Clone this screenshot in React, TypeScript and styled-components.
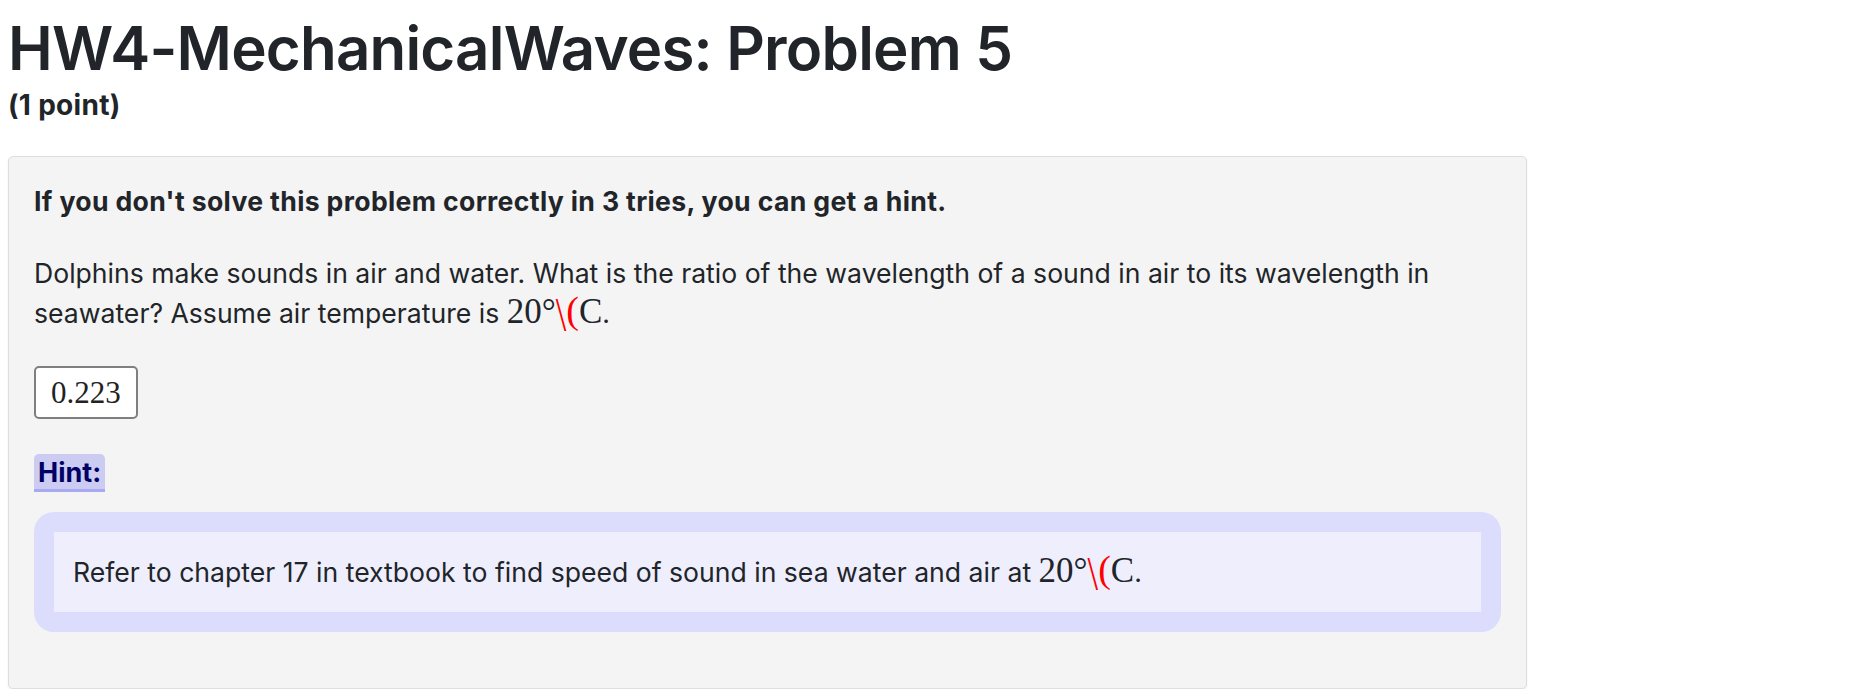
import React from "react";
import styled, { createGlobalStyle } from "styled-components";

const GlobalStyle = createGlobalStyle`
  html, body {
    margin: 0;
    padding: 0;
    background: #ffffff;
  }
  body {
    font-family: Inter, "Noto Sans", "Liberation Sans", sans-serif;
    color: #212529;
  }
`;

const Page = styled.div`
  padding: 0 8px;
  width: 1519px;
`;

const Title = styled.h1`
  margin: 0;
  padding-top: 10px;
  font-size: 60px;
  font-weight: 600;
  line-height: 76px;
  letter-spacing: -0.8px;
`;

const Points = styled.div`
  font-size: 28px;
  font-weight: 700;
  line-height: 32px;
  letter-spacing: 0.3px;
  margin-top: 3px;
`;

const Card = styled.div`
  margin-top: 35px;
  background: #f4f4f4;
  border: 1px solid #dedede;
  border-radius: 5px;
  box-shadow: 0 1px 2px rgba(0, 0, 0, 0.08);
  padding: 24px 25px 56px;
  font-size: 26.6px;
  line-height: 40px;
`;

const Lead = styled.p`
  margin: 0 0 32px;
  font-weight: 700;
  letter-spacing: 0.35px;
`;

const Text = styled.p`
  margin: 0 0 33px;
`;

const Math = styled.span`
  font-family: "Liberation Serif", "DejaVu Serif", serif;
  font-size: 35px;
  line-height: 0;
`;

const Err = styled.span`
  color: #ff0000;
  font-family: "Liberation Serif", serif;
  font-size: 38px;
  line-height: 0;
`;

const Slash = styled.span`
  display: inline-block;
  transform: translateY(4px) scaleY(1.3);
`;

const AnswerBox = styled.div`
  display: inline-flex;
  align-items: center;
  height: 49px;
  padding: 0 15px;
  background: #ffffff;
  border: 2px solid #7f7f7f;
  border-radius: 5px;
  font-family: "Liberation Serif", "DejaVu Serif", serif;
  font-size: 31px;
  color: #222222;
`;

const HintRow = styled.div`
  margin-top: 35px;
  line-height: 0;
`;

const HintLabel = styled.span`
  display: inline-block;
  height: 35px;
  padding: 0 4px;
  background: #ccccf2;
  border-bottom: 3px solid #a9a9f3;
  border-radius: 5px 5px 0 0;
  color: #000066;
  font-weight: 700;
  font-size: 27px;
  line-height: 38px;
`;

const HintOuter = styled.div`
  margin-top: 20px;
  background: #dcdcfd;
  border-radius: 20px;
  padding: 20px;
`;

const HintInner = styled.div`
  background: #eeeefd;
  padding: 20px 19px;
`;

const Temp = () => (
  <>
    <Math>20°</Math>
    <Err>
      <Slash>\</Slash>(
    </Err>
    <Math>C</Math>.
  </>
);

export default function App() {
  return (
    <>
      <GlobalStyle />
      <Page>
        <Title>HW4-MechanicalWaves: Problem 5</Title>
        <Points>(1 point)</Points>
        <Card>
          <Lead>If you don't solve this problem correctly in 3 tries, you can get a hint.</Lead>
          <Text>
            Dolphins make sounds in air and water. What is the ratio of the wavelength of a sound in air to
            its wavelength in seawater? Assume air temperature is <Temp />
          </Text>
          <AnswerBox>0.223</AnswerBox>
          <HintRow>
            <HintLabel>Hint:</HintLabel>
          </HintRow>
          <HintOuter>
            <HintInner>
              Refer to chapter 17 in textbook to find speed of sound in sea water and air at <Temp />
            </HintInner>
          </HintOuter>
        </Card>
      </Page>
    </>
  );
}
